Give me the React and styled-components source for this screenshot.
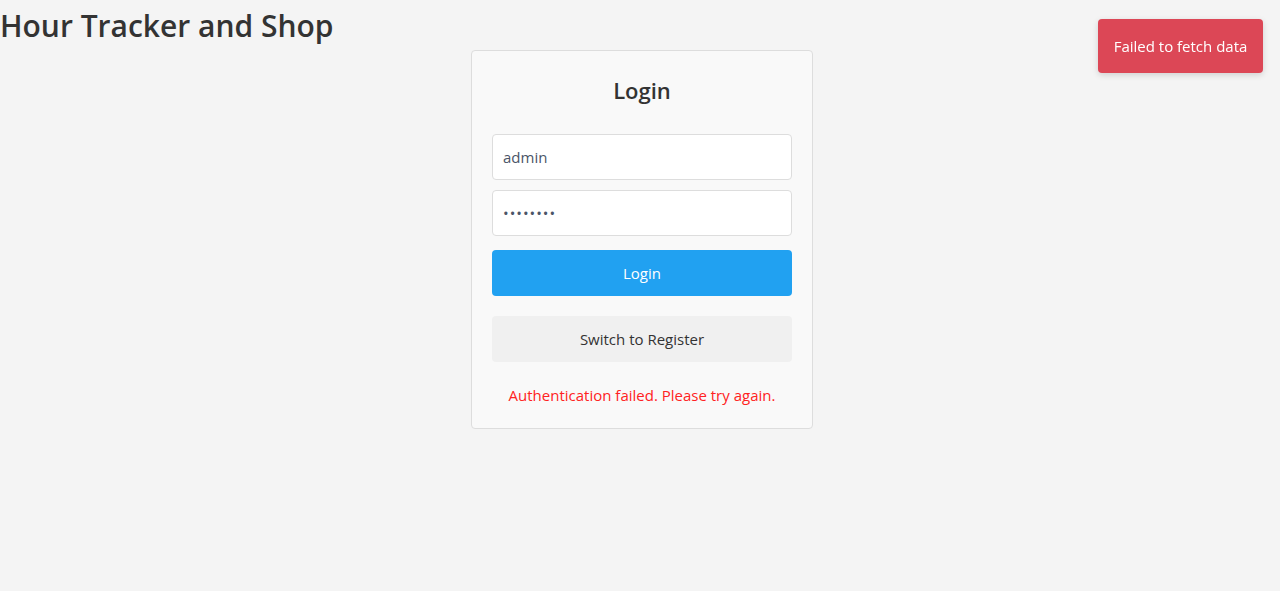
import React from "react";
import styled, { createGlobalStyle } from "styled-components";

const GlobalStyle = createGlobalStyle`
  body {
    margin: 0;
    background-color: #f4f4f4;
    font-family: "Open Sans", "Noto Sans", sans-serif;
    color: #333;
  }
`;

const Page = styled.div`
  min-height: 591px;
  display: flex;
  flex-direction: column;
`;

const Title = styled.h1`
  margin: 0;
  font-size: 30px;
  font-weight: 600;
  line-height: 38px;
  padding-top: 7px;
  color: #333;
`;

const Card = styled.div`
  box-sizing: border-box;
  width: 342px;
  margin: 5px 0 0 calc(50% - 169px);
  padding: 25px 20px 20px;
  background-color: #f9f9f9;
  border: 1px solid #ddd;
  border-radius: 4px;
  display: flex;
  flex-direction: column;
`;

const Heading = styled.h2`
  margin: 0 0 29px;
  font-size: 22px;
  font-weight: 600;
  line-height: 29px;
  text-align: center;
`;

const Form = styled.form`
  display: flex;
  flex-direction: column;
`;

const Input = styled.input`
  box-sizing: border-box;
  height: 46px;
  margin-bottom: ${(p) => p.$gap}px;
  padding: 0 10px;
  border: 1px solid #ddd;
  border-radius: 4px;
  background: #fff;
  font-family: inherit;
  font-size: 15px;
  color: #4a5568;
  letter-spacing: ${(p) => (p.type === "password" ? "1px" : "0")};
`;

const Button = styled.button`
  box-sizing: border-box;
  height: 46px;
  border: none;
  border-radius: 4px;
  font-family: inherit;
  font-size: 15px;
  cursor: pointer;
  background-color: ${(p) => (p.$primary ? "#21a1f1" : "#f0f0f0")};
  color: ${(p) => (p.$primary ? "#fff" : "#333")};
  margin-bottom: ${(p) => p.$gap || 0}px;
`;

const ErrorText = styled.p`
  margin: 22px 0 2px;
  text-align: center;
  color: #f22;
  font-size: 15px;
  line-height: 22px;
`;

const Toast = styled.div`
  position: fixed;
  top: 19px;
  right: 17px;
  width: 165px;
  height: 54px;
  display: flex;
  align-items: center;
  justify-content: center;
  background-color: #dc4756;
  color: #fff;
  font-size: 15px;
  border-radius: 4px;
  box-shadow: 0 2px 6px rgba(0, 0, 0, 0.15);
`;

export default function App() {
  return (
    <>
      <GlobalStyle />
      <Page>
        <Title>Hour Tracker and Shop</Title>
        <Card>
          <Heading>Login</Heading>
          <Form onSubmit={(e) => e.preventDefault()}>
            <Input type="text" defaultValue="admin" $gap={10} />
            <Input type="password" defaultValue="password" $gap={14} />
            <Button type="submit" $primary $gap={20}>
              Login
            </Button>
            <Button type="button">Switch to Register</Button>
          </Form>
          <ErrorText>Authentication failed. Please try again.</ErrorText>
        </Card>
      </Page>
      <Toast>Failed to fetch data</Toast>
    </>
  );
}
